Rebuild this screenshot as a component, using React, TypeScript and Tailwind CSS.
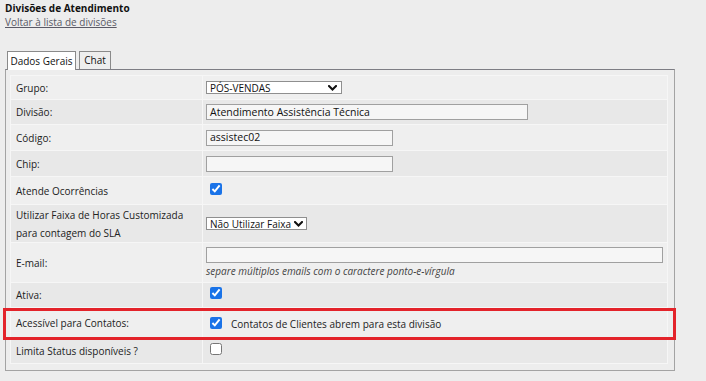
import React from 'react';

const font = { fontFamily: '"Open Sans", "Liberation Sans", sans-serif' };

function Chevron() {
  return (
    <svg className="w-[9px] h-[6px] shrink-0" viewBox="0 0 9 6" fill="none">
      <path d="M1 1l3.5 3.5L8 1" stroke="#111" strokeWidth={2} strokeLinecap="square" />
    </svg>
  );
}

function FakeSelect({ value, width }: { value: string; width: string }) {
  return (
    <div className={`${width} h-[13px] border border-[#8f8f8f] bg-white flex items-center justify-between gap-[3px] pl-[3px] pr-[4px] text-[10px] leading-none text-[#111] whitespace-nowrap`}>
      <span>{value}</span>
      <Chevron />
    </div>
  );
}

function TextBox({ value, width }: { value?: string; width: string }) {
  return (
    <div className={`${width} h-[16px] border border-[#a0a0a0] bg-[#f6f6f6] flex items-center px-[3px] text-[10.5px] leading-none text-[#111]`}>
      {value}
    </div>
  );
}

function Check({ checked }: { checked?: boolean }) {
  return (
    <input
      type="checkbox"
      defaultChecked={checked}
      className="m-0 ml-[4px] w-[12px] h-[12px] accent-[#1a73e8]"
    />
  );
}

type Row = { label: React.ReactNode; h: string; content: React.ReactNode };

export default function App() {
  const rows: Row[] = [
    { label: 'Grupo:', h: 'h-[23px]', content: <FakeSelect value="PÓS-VENDAS" width="w-[136px]" /> },
    { label: 'Divisão:', h: 'h-[24px]', content: <TextBox value="Atendimento Assistência Técnica" width="w-[322px]" /> },
    { label: 'Código:', h: 'h-[25px]', content: <TextBox value="assistec02" width="w-[187px]" /> },
    { label: 'Chip:', h: 'h-[25px]', content: <TextBox width="w-[187px]" /> },
    { label: 'Atende Ocorrências', h: 'h-[27px]', content: <Check checked /> },
    {
      label: (
        <>
          Utilizar Faixa de Horas Customizada
          <br />
          para contagem do SLA
        </>
      ),
      h: 'h-[37px]',
      content: <FakeSelect value="Não Utilizar Faixa" width="w-[101px]" />,
    },
    {
      label: 'E-mail:',
      h: 'h-[39px]',
      content: (
        <div className="flex flex-col gap-[1px]">
          <TextBox width="w-[457px]" />
          <span className="italic text-[10px] leading-[14px] text-[#444]">separe múltiplos emails com o caractere ponto-e-vírgula</span>
        </div>
      ),
    },
    { label: 'Ativa:', h: 'h-[24px]', content: <Check checked /> },
    {
      label: 'Acessível para Contatos:',
      h: 'h-[29px]',
      content: (
        <div className="flex items-center gap-[9px]">
          <Check checked />
          <span className="text-[10px] text-[#222] pt-[3px]">Contatos de Clientes abrem para esta divisão</span>
        </div>
      ),
    },
    { label: 'Limita Status disponíveis ?', h: 'h-[25px]', content: <Check /> },
  ];

  return (
    <div className="relative w-[706px] h-[381px] bg-[#ededed] overflow-hidden text-[#222]" style={font}>
      <div className="px-[5px] pt-[1px]">
        <div className="text-[10px] leading-[14px] font-bold text-[#111]">Divisões de Atendimento</div>
        <a href="#" className="block w-fit text-[10px] leading-[14px] text-[#5a5a66] underline">
          Voltar à lista de divisões
        </a>
      </div>

      <div className="mt-[22px] ml-[7px] flex items-end gap-[3px] relative z-10">
        <div className="w-[69px] h-[19px] border border-b-0 border-[#8a8a8a] bg-white text-[10px] flex items-center justify-center text-[#111]">
          Dados Gerais
        </div>
        <div className="w-[32px] h-[18px] mb-[1px] border border-b-0 border-[#8a8a8a] bg-[#eeeeee] text-[10px] flex items-center justify-center text-[#111]">
          Chat
        </div>
      </div>

      <div className="ml-[5px] -mt-[1px] w-[670px] h-[302px] border border-[#a3a3a3] border-t-[#7d7d84] pl-[4px] pr-[6px] pt-[5px]">
        <table className="w-full border-separate border-spacing-[1px] bg-[#f6f6f6] text-[10px]">
          <tbody>
            {rows.map((r, i) => (
              <tr key={i} className={`${r.h} ${i % 2 === 0 ? 'bg-[#efefef]' : 'bg-[#e8e8e8]'}`}>
                <td className="w-[191px] pl-[5px] align-middle leading-[18px] text-[#222]">{r.label}</td>
                <td className="pl-[3px] align-middle">{r.content}</td>
              </tr>
            ))}
          </tbody>
        </table>
      </div>

      <div className="absolute left-[3px] top-[308px] w-[673px] h-[32px] border-[3px] border-[#e3232a]" />
    </div>
  );
}
